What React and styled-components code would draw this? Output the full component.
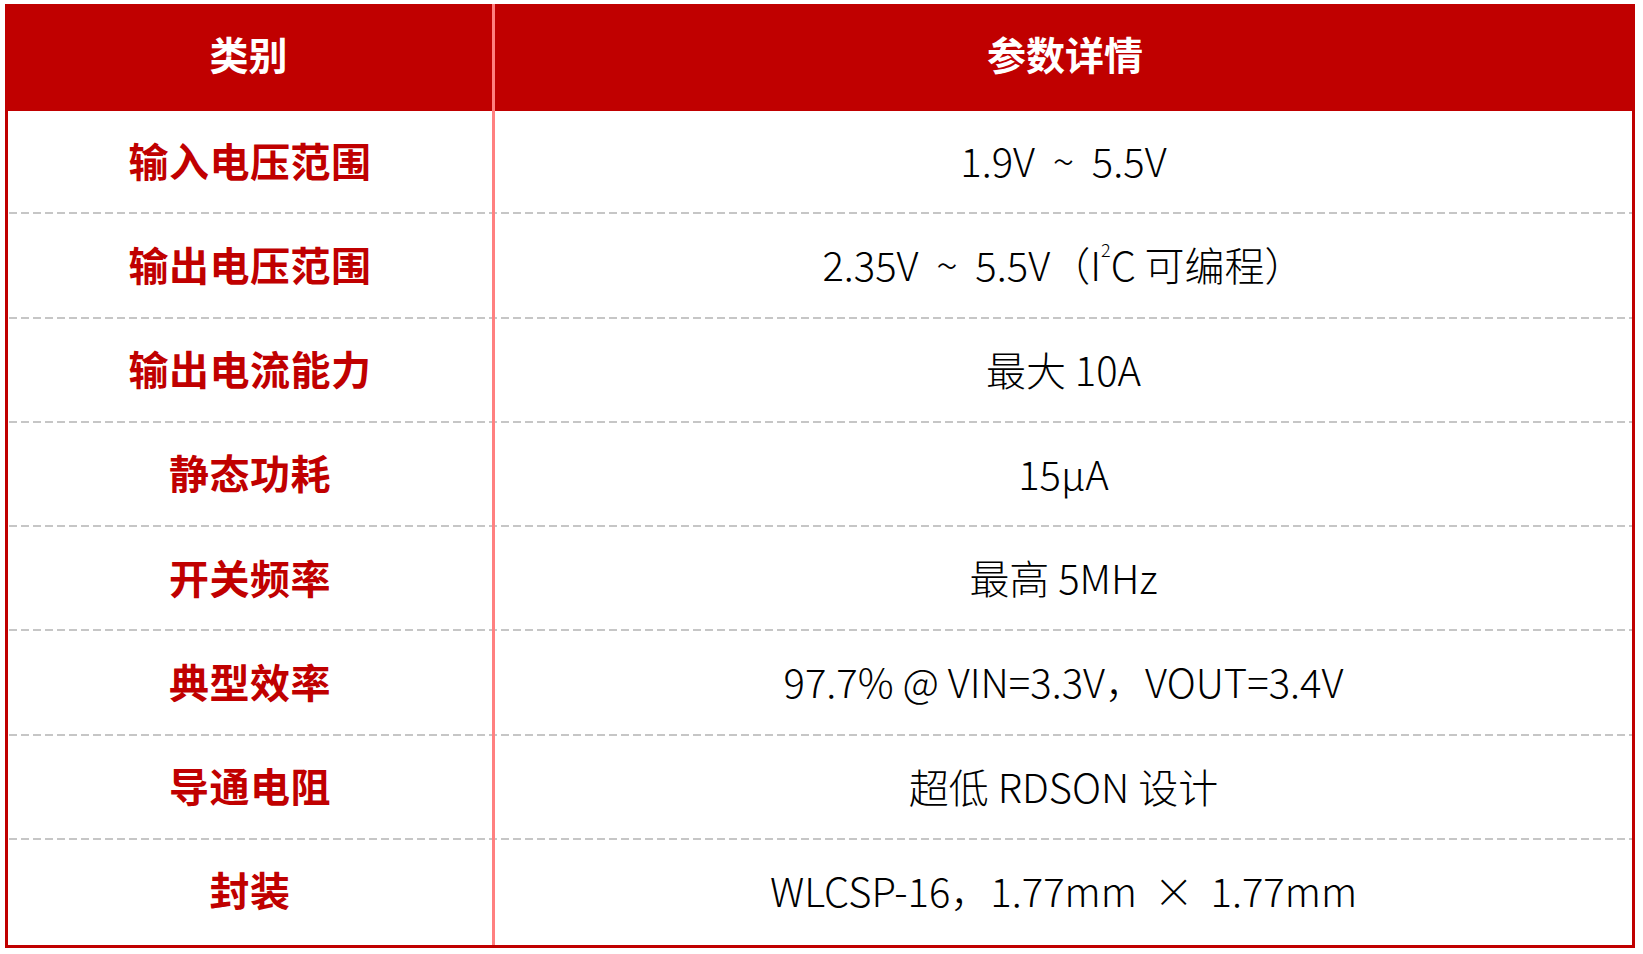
import React from "react";
import styled, { createGlobalStyle } from "styled-components";

const GlobalStyle = createGlobalStyle`
  html, body { margin: 0; padding: 0; background: #ffffff; }
  body { font-family: "Noto Sans CJK SC", "Noto Sans", sans-serif; }
`;

const Page = styled.div`
  padding: 4px 8px 6px 5px;
  width: 1630px;
`;

const Table = styled.div`
  width: 1630px;
  display: flex;
  flex-direction: column;
`;

const HeaderRow = styled.div`
  display: grid;
  grid-template-columns: 490px 1fr;
  height: 107px;
  background: #c00000;
`;

const HeaderCell = styled.div`
  display: flex;
  align-items: center;
  justify-content: center;
  box-sizing: border-box;
  color: #ffffff;
  font-family: "Noto Sans CJK SC", sans-serif;
  font-weight: 700;
  font-size: 39px;
  padding-bottom: 9px;
  border-right: ${(p) => (p.$divider ? "3px solid #ff8080" : "none")};
`;

const Body = styled.div`
  border: 3px solid #c00000;
  border-top: none;
  display: flex;
  flex-direction: column;
`;

const Row = styled.div`
  display: grid;
  grid-template-columns: 487px 1fr;
  height: 104.25px;
  background: ${(p) =>
    p.$last
      ? "transparent"
      : "repeating-linear-gradient(to right, #c6c6c6 0 8px, transparent 8px 12px) left bottom / 100% 2px no-repeat"};
  background-position: 1px calc(100% - 1px);
`;

const NameCell = styled.div`
  display: flex;
  align-items: center;
  justify-content: center;
  box-sizing: border-box;
  border-right: 3px solid #ff8080;
  color: #c00000;
  font-family: "Noto Sans CJK SC", sans-serif;
  font-weight: 700;
  font-size: 40px;
  letter-spacing: 0.5px;
  padding-bottom: 7px;
`;

const ValueCell = styled.div`
  display: flex;
  align-items: center;
  justify-content: center;
  color: #000000;
  font-family: "Noto Sans CJK SC", sans-serif;
  font-weight: 300;
  font-size: 40px;
  white-space: pre;
  padding-bottom: 6px;
`;

const Sup = styled.sup`
  font-size: 0.45em;
  vertical-align: 0;
  position: relative;
  top: -0.85em;
`;

const rows = [
  { name: "输入电压范围", value: "1.9V  ~  5.5V" },
  {
    name: "输出电压范围",
    value: (
      <>
        2.35V  ~  5.5V（I<Sup>2</Sup>C 可编程）
      </>
    ),
  },
  { name: "输出电流能力", value: "最大 10A" },
  { name: "静态功耗", value: "15μA" },
  { name: "开关频率", value: "最高 5MHz" },
  { name: "典型效率", value: "97.7% @ VIN=3.3V，VOUT=3.4V" },
  { name: "导通电阻", value: "超低 RDSON 设计" },
  { name: "封装", value: "WLCSP-16，1.77mm \u2009×\u2009 1.77mm" },
];

export default function App() {
  return (
    <>
      <GlobalStyle />
      <Page>
        <Table>
          <HeaderRow>
            <HeaderCell $divider>类别</HeaderCell>
            <HeaderCell>参数详情</HeaderCell>
          </HeaderRow>
          <Body>
            {rows.map((r, i) => (
              <Row key={r.name} $last={i === rows.length - 1}>
                <NameCell>{r.name}</NameCell>
                <ValueCell>{r.value}</ValueCell>
              </Row>
            ))}
          </Body>
        </Table>
      </Page>
    </>
  );
}
